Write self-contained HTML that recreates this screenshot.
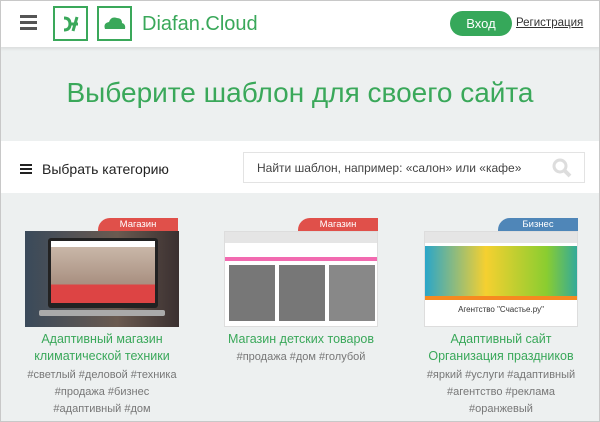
<!DOCTYPE html>
<html><head><meta charset="utf-8"><style>
*{margin:0;padding:0;box-sizing:border-box}
body{width:600px;height:422px;overflow:hidden;font-family:"Liberation Sans",sans-serif;background:#edf0f0;position:relative}
.frame{position:absolute;inset:0;border:1px solid #c8c8c8;pointer-events:none;z-index:9}
.hdr{position:absolute;left:0;top:0;width:600px;height:47px;background:#fff;box-shadow:0 2px 3px rgba(0,0,0,.08)}
.burger{position:absolute;left:20px;top:15px;width:17px}
.burger i{display:block;height:3px;background:#555;margin-bottom:3px}
.logo{position:absolute;top:6px;width:35px;height:35px;border:2px solid #3aa85a}
.brand{position:absolute;left:142px;top:13px;font-size:20px;color:#3aa85a}
.btn{position:absolute;left:450px;top:11px;width:62px;height:25px;border-radius:13px;background:#36a85a;color:#fff;font-size:13px;text-align:center;line-height:25px}
.reg{position:absolute;left:516px;top:17px;font-size:11.5px;color:#333;text-decoration:underline}
h1{position:absolute;left:0;width:600px;top:77px;text-align:center;font-weight:normal;font-size:28px;color:#3aa85a}
.bar{position:absolute;left:0;top:141px;width:600px;height:52px;background:#fff}
.cat{position:absolute;left:20px;top:161px;font-size:14px;color:#222}
.cat i{display:inline-block;width:12px;height:2px;background:#222;box-shadow:0 4px #222,0 -4px #222;vertical-align:middle;margin-right:10px;margin-top:-3px}
.search{position:absolute;left:243px;top:152px;width:342px;height:31px;border:1px solid #e3e3e3;background:#fff;font-size:12px;color:#444;padding:8px 0 0 13px}
.card{position:absolute;top:218px;width:160px;text-align:center}
.tab{position:absolute;top:0;right:0;width:80px;height:14px;border-radius:12px 0 0 0;color:#fff;font-size:9.5px;line-height:14px}
.img{position:absolute;top:13px;left:0;width:154px;height:96px}
.t{position:absolute;top:113px;left:-20px;width:194px;color:#3aa85a;font-size:12.5px;line-height:17px}
.g{color:#777;font-size:11px;line-height:17px;position:absolute;left:-20px;width:194px}
</style></head><body>
<div class="hdr">
 <div class="burger"><i></i><i></i><i></i></div>
 <div class="logo" style="left:53px"><svg width="31" height="31"><path d="M9 10 q6 0 6 6 q0 6 -6 6 M15 16 h8 M22 9 l-4 14" stroke="#3aa85a" stroke-width="3" fill="none"/></svg></div>
 <div class="logo" style="left:97px"><svg width="31" height="31"><path d="M6 21 q-2-6 4-7 q2-6 8-4 q5 0 5 5 q4 1 3 6 z" fill="#3aa85a"/></svg></div>
 <div class="brand">Diafan.Cloud</div>
 <div class="btn">Вход</div><div class="reg">Регистрация</div>
</div>
<h1>Выберите шаблон для своего сайта</h1>
<div class="bar"></div>
<div class="cat"><i></i>Выбрать категорию</div>
<div class="search">Найти шаблон, например: «салон» или «кафе»
<svg style="position:absolute;right:12px;top:5px" width="20" height="20"><circle cx="8" cy="8" r="6" stroke="#ddd" stroke-width="3" fill="none"/><path d="M12 12 l6 6" stroke="#ddd" stroke-width="4"/></svg></div>

<div class="card" style="left:25px">
 <div class="tab" style="right:7px;background:#e0504a">Магазин</div>
 <div class="img" style="background:linear-gradient(90deg,#3a4a5a,#6a5a50 60%,#3a3030)"><div style="position:absolute;left:23px;top:7px;width:110px;height:70px;background:#222;border-radius:3px"><div style="margin:3px;height:62px;background:linear-gradient(#fff 10%,#c9b7a8 10%,#a88f80 70%,#d44 70%)"></div></div><div style="position:absolute;left:14px;top:79px;width:126px;height:6px;background:#aaa;border-radius:2px"></div></div>
 <div class="t">Адаптивный магазин<br>климатической техники</div>
 <div class="g" style="top:149px">#светлый #деловой #техника<br>#продажа #бизнес<br>#адаптивный #дом</div>
</div>
<div class="card" style="left:224px">
 <div class="tab" style="right:6px;background:#e0504a">Магазин</div>
 <div class="img" style="background:#fff;border:1px solid #ddd"><div style="height:11px;background:#e5e5e5"></div><div style="position:absolute;top:25px;left:0;right:0;height:4px;background:#f26ab0"></div><div style="position:absolute;top:33px;left:4px;width:46px;height:56px;background:#777"></div><div style="position:absolute;top:33px;left:54px;width:46px;height:56px;background:#777"></div><div style="position:absolute;top:33px;left:104px;width:46px;height:56px;background:#888"></div></div>
 <div class="t">Магазин детских товаров</div>
 <div class="g" style="top:131px">#продажа #дом #голубой</div>
</div>
<div class="card" style="left:424px">
 <div class="tab" style="right:6px;background:#4f86b8">Бизнес</div>
 <div class="img" style="background:#fff;border:1px solid #ddd"><div style="height:11px;background:#e5e5e5"></div><div style="position:absolute;top:14px;left:0;right:0;height:50px;background:linear-gradient(90deg,#2aa6c9,#f5d030 40%,#8acd30 80%,#3a9)"></div><div style="position:absolute;top:64px;left:0;right:0;height:4px;background:#f68a20"></div><div style="position:absolute;top:73px;width:100%;font-size:8px;color:#333">Агентство "Счастье.ру"</div></div>
 <div class="t">Адаптивный сайт<br>Организация праздников</div>
 <div class="g" style="top:149px">#яркий #услуги #адаптивный<br>#агентство #реклама<br>#оранжевый</div>
</div>
<div class="frame"></div>
</body></html>
